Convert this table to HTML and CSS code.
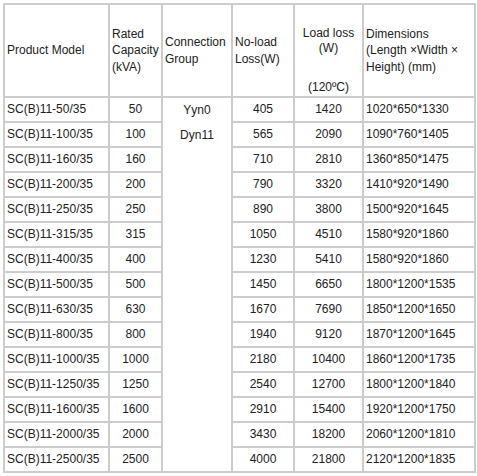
FILE: index.html
```html
<!DOCTYPE html>
<html lang="en">
  <head>
    <meta charset="UTF-8" />
    <meta name="viewport" content="width=device-width, initial-scale=1.0" />
    <title>SC(B)11 35kV Dry-type Transformer</title>
    <link rel="stylesheet" href="styles.css">
  </head>
  <body>
    <table class="spec">
      <colgroup>
        <col class="c-model" />
        <col class="c-cap" />
        <col class="c-group" />
        <col class="c-noload" />
        <col class="c-load" />
        <col class="c-dim" />
      </colgroup>
      <tr class="head">
        <td>Product Model</td>
        <td>Rated<br />Capacity<br />(kVA)</td>
        <td>Connection<br />Group</td>
        <td>No-load<br />Loss(W)</td>
        <td class="load">
          <div class="title">Load loss<br />(W)</div>
          <div class="temp">(120ºC)</div>
        </td>
        <td>Dimensions<br />(Length ×Width ×<br />Height) (mm)</td>
      </tr>
      <tr>
        <td>SC(B)11-50/35</td>
        <td class="mid">50</td>
        <td class="group" rowspan="15">Yyn0<br />Dyn11</td>
        <td class="mid">405</td>
        <td class="mid">1420</td>
        <td>1020*650*1330</td>
      </tr>
      <tr>
        <td>SC(B)11-100/35</td>
        <td class="mid">100</td>
        <td class="mid">565</td>
        <td class="mid">2090</td>
        <td>1090*760*1405</td>
      </tr>
      <tr>
        <td>SC(B)11-160/35</td>
        <td class="mid">160</td>
        <td class="mid">710</td>
        <td class="mid">2810</td>
        <td>1360*850*1475</td>
      </tr>
      <tr>
        <td>SC(B)11-200/35</td>
        <td class="mid">200</td>
        <td class="mid">790</td>
        <td class="mid">3320</td>
        <td>1410*920*1490</td>
      </tr>
      <tr>
        <td>SC(B)11-250/35</td>
        <td class="mid">250</td>
        <td class="mid">890</td>
        <td class="mid">3800</td>
        <td>1500*920*1645</td>
      </tr>
      <tr>
        <td>SC(B)11-315/35</td>
        <td class="mid">315</td>
        <td class="mid">1050</td>
        <td class="mid">4510</td>
        <td>1580*920*1860</td>
      </tr>
      <tr>
        <td>SC(B)11-400/35</td>
        <td class="mid">400</td>
        <td class="mid">1230</td>
        <td class="mid">5410</td>
        <td>1580*920*1860</td>
      </tr>
      <tr>
        <td>SC(B)11-500/35</td>
        <td class="mid">500</td>
        <td class="mid">1450</td>
        <td class="mid">6650</td>
        <td>1800*1200*1535</td>
      </tr>
      <tr>
        <td>SC(B)11-630/35</td>
        <td class="mid">630</td>
        <td class="mid">1670</td>
        <td class="mid">7690</td>
        <td>1850*1200*1650</td>
      </tr>
      <tr>
        <td>SC(B)11-800/35</td>
        <td class="mid">800</td>
        <td class="mid">1940</td>
        <td class="mid">9120</td>
        <td>1870*1200*1645</td>
      </tr>
      <tr>
        <td>SC(B)11-1000/35</td>
        <td class="mid">1000</td>
        <td class="mid">2180</td>
        <td class="mid">10400</td>
        <td>1860*1200*1735</td>
      </tr>
      <tr>
        <td>SC(B)11-1250/35</td>
        <td class="mid">1250</td>
        <td class="mid">2540</td>
        <td class="mid">12700</td>
        <td>1800*1200*1840</td>
      </tr>
      <tr>
        <td>SC(B)11-1600/35</td>
        <td class="mid">1600</td>
        <td class="mid">2910</td>
        <td class="mid">15400</td>
        <td>1920*1200*1750</td>
      </tr>
      <tr>
        <td>SC(B)11-2000/35</td>
        <td class="mid">2000</td>
        <td class="mid">3430</td>
        <td class="mid">18200</td>
        <td>2060*1200*1810</td>
      </tr>
      <tr>
        <td>SC(B)11-2500/35</td>
        <td class="mid">2500</td>
        <td class="mid">4000</td>
        <td class="mid">21800</td>
        <td>2120*1200*1835</td>
      </tr>
    </table>
  </body>
</html>
```

FILE: styles.css
```css
body {
  margin: 0;
  padding: 3px;
  background: #fff;
  font-family: "Liberation Sans", Arial, sans-serif;
  font-size: 12px;
  color: #222;
}

.spec {
  border-collapse: collapse;
  table-layout: fixed;
  width: 471px;
}

.c-model { width: 105px; }
.c-cap { width: 53px; }
.c-group { width: 70px; }
.c-noload { width: 62px; }
.c-load { width: 69px; }
.c-dim { width: 112px; }

.spec td {
  border: 2px solid #ccc;
  padding: 0 2px;
  height: 23px;
  line-height: 15px;
  vertical-align: middle;
  white-space: nowrap;
}

.spec .head td {
  height: 91px;
  line-height: 16.5px;
}

.spec .head td.load {
  text-align: center;
  vertical-align: top;
  line-height: 15px;
}

.load .title {
  padding-top: 21px;
}

.load .temp {
  margin-top: 24px;
}

.spec td.mid {
  text-align: center;
}

.spec td.group {
  text-align: center;
  vertical-align: top;
  line-height: 25px;
}
```
